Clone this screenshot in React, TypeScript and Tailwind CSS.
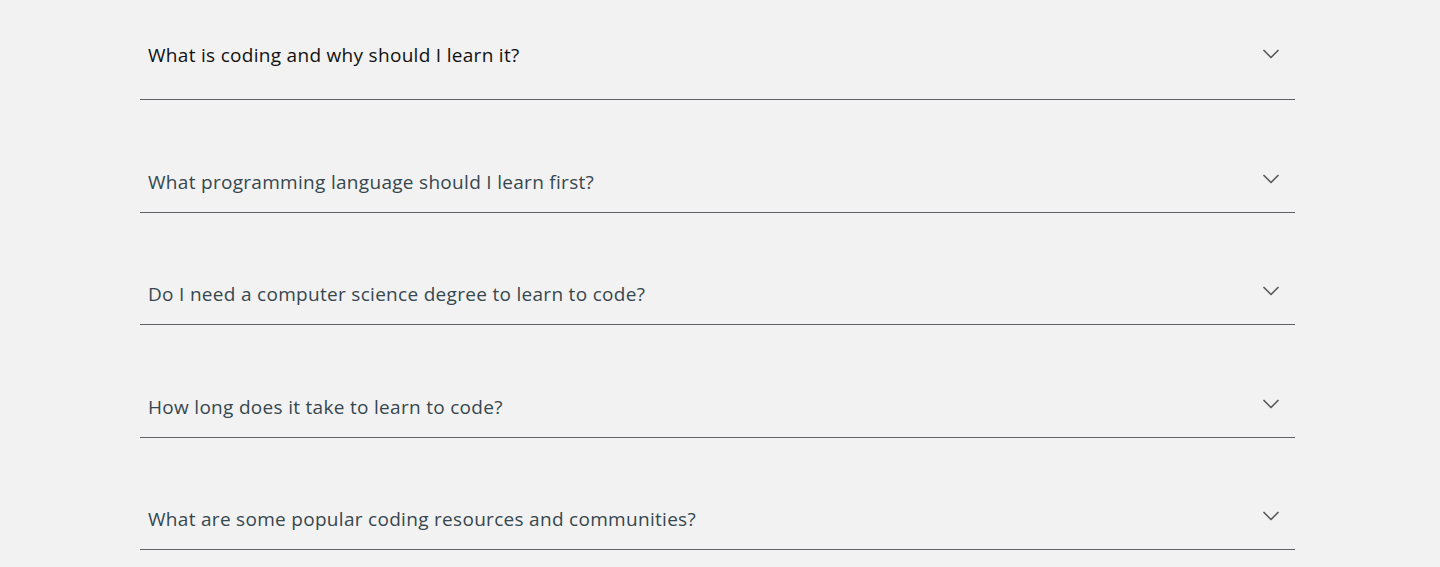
import { ChevronDown } from 'lucide-react'

const faqs = [
  'What is coding and why should I learn it?',
  'What programming language should I learn first?',
  'Do I need a computer science degree to learn to code?',
  'How long does it take to learn to code?',
  'What are some popular coding resources and communities?',
]

export default function App() {
  return (
    <div
      className="min-h-[567px] bg-[#f2f2f2] pt-[41px]"
      style={{ fontFamily: '"Open Sans", "Noto Sans", sans-serif' }}
    >
      <div className="ml-[140px] w-[1155px]">
        {faqs.map((q, i) => (
          <div key={q} className="border-b border-[#5f6368]">
            <button
              className={
                i === 0
                  ? 'flex w-full items-start justify-between pb-[30px] pl-[8px] pr-[10px] text-left'
                  : 'flex w-full items-start justify-between pt-[67.5px] pb-[16px] pl-[8px] pr-[10px] text-left'
              }
            >
              <span
                className={
                  i === 0
                    ? 'text-[19px] leading-[28px] tracking-[0.3px] text-[#111111]'
                    : 'text-[19px] leading-[28px] tracking-[0.3px] text-[#37474f]'
                }
              >
                {q}
              </span>
              <ChevronDown
                className={
                  i === 0
                    ? 'mt-[-1px] h-[28px] w-[28px] shrink-0 text-[#5a5a5a]'
                    : 'mt-[-3px] h-[28px] w-[28px] shrink-0 text-[#5a5a5a]'
                }
                strokeWidth={1.5}
              />
            </button>
          </div>
        ))}
      </div>
    </div>
  )
}
